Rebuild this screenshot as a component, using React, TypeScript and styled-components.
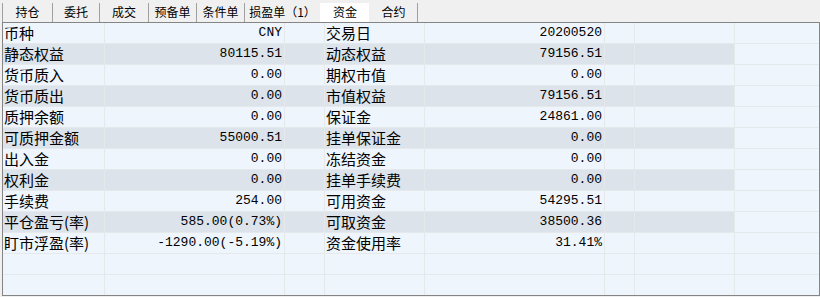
import styled, { createGlobalStyle } from "styled-components"

const GlobalStyle = createGlobalStyle`
    html, body {
        margin: 0;
        padding: 0;
        background: #f0f0f0;
        overflow: hidden;
    }
`

const CJK = `"Noto Sans CJK SC", "Noto Sans", sans-serif`
const MONO = `"Liberation Mono", "DejaVu Sans Mono", monospace`

const Page = styled.div`
    width: 820px;
    height: 297px;
    padding-left: 2px;
    box-sizing: border-box;
`

const TabBar = styled.div`
    display: flex;
    align-items: flex-end;
    height: 22px;
`

const Tab = styled.div<{ $w: number; $active?: boolean; $sep: boolean }>`
    width: ${(p) => p.$w}px;
    height: 19px;
    box-sizing: border-box;
    border-left: 1px solid ${(p) => (p.$sep ? "#a0a0a0" : "transparent")};
    background: ${(p) => (p.$active ? "#ffffff" : "transparent")};
    font-family: ${CJK};
    font-size: 12px;
    line-height: 18px;
    text-align: center;
    color: #000;
    white-space: nowrap;
`

const TabEnd = styled.div`
    width: 1px;
    height: 19px;
    background: #a0a0a0;
`

const Sheet = styled.div`
    width: 818px;
    height: 274px;
    box-sizing: border-box;
    border: 1px solid #858585;
    background: #eef5fd;
    overflow: hidden;
`

const Row = styled.div`
    display: grid;
    grid-template-columns: 102px 180px 40px 100px 180px 30px 100px 84px;
    height: 21px;
`

const Cell = styled.div<{ $dark?: boolean; $num?: boolean; $last?: boolean }>`
    box-sizing: border-box;
    height: 21px;
    border-bottom: 1px solid #e6e9ec;
    border-right: ${(p) => (p.$last ? "none" : "1px solid #e6e9ec")};
    background: ${(p) => (p.$dark ? "#dce3ea" : "#eef5fd")};
    color: #000;
    white-space: nowrap;
    overflow: hidden;
    font-family: ${(p) => (p.$num ? MONO : CJK)};
    font-size: ${(p) => (p.$num ? "13px" : "15px")};
    line-height: 19px;
    text-align: ${(p) => (p.$num ? "right" : "left")};
    padding: ${(p) => (p.$num ? "0 2px 0 0" : "0 0 0 1px")};
`

const tabs = [
    { label: "持仓", w: 50 },
    { label: "委托", w: 47 },
    { label: "成交", w: 49 },
    { label: "预备单", w: 48 },
    { label: "条件单", w: 48 },
    { label: "损盈单（1）", w: 76 },
    { label: "资金", w: 49, active: true },
    { label: "合约", w: 48 },
]

const rows: [string, string, string, string][] = [
    ["币种", "CNY", "交易日", "20200520"],
    ["静态权益", "80115.51", "动态权益", "79156.51"],
    ["货币质入", "0.00", "期权市值", "0.00"],
    ["货币质出", "0.00", "市值权益", "79156.51"],
    ["质押余额", "0.00", "保证金", "24861.00"],
    ["可质押金额", "55000.51", "挂单保证金", "0.00"],
    ["出入金", "0.00", "冻结资金", "0.00"],
    ["权利金", "0.00", "挂单手续费", "0.00"],
    ["手续费", "254.00", "可用资金", "54295.51"],
    ["平仓盈亏(率)", "585.00(0.73%)", "可取资金", "38500.36"],
    ["盯市浮盈(率)", "-1290.00(-5.19%)", "资金使用率", "31.41%"],
]

const FundRow = ({ data, dark }: { data?: [string, string, string, string]; dark: boolean }) => {
    const [l1, v1, l2, v2] = data ?? ["", "", "", ""]
    return (
        <Row>
            <Cell $dark={dark}>{l1}</Cell>
            <Cell $dark={dark} $num>{v1}</Cell>
            <Cell $dark={dark} />
            <Cell $dark={dark}>{l2}</Cell>
            <Cell $dark={dark} $num>{v2}</Cell>
            <Cell $dark={dark} />
            <Cell $dark={dark} />
            <Cell $last />
        </Row>
    )
}

export default function App() {
    return (
        <>
            <GlobalStyle />
            <Page>
                <TabBar>
                    {tabs.map((t, i) => {
                        const prevActive = i > 0 && tabs[i - 1].active
                        return (
                            <Tab key={t.label} $w={t.w} $active={t.active} $sep={!t.active && !prevActive}>
                                {t.label}
                            </Tab>
                        )
                    })}
                    <TabEnd />
                </TabBar>
                <Sheet>
                    {rows.map((r, i) => (
                        <FundRow key={r[0]} data={r} dark={i % 2 === 1} />
                    ))}
                    <FundRow dark={false} />
                    <FundRow dark={false} />
                </Sheet>
            </Page>
        </>
    )
}
